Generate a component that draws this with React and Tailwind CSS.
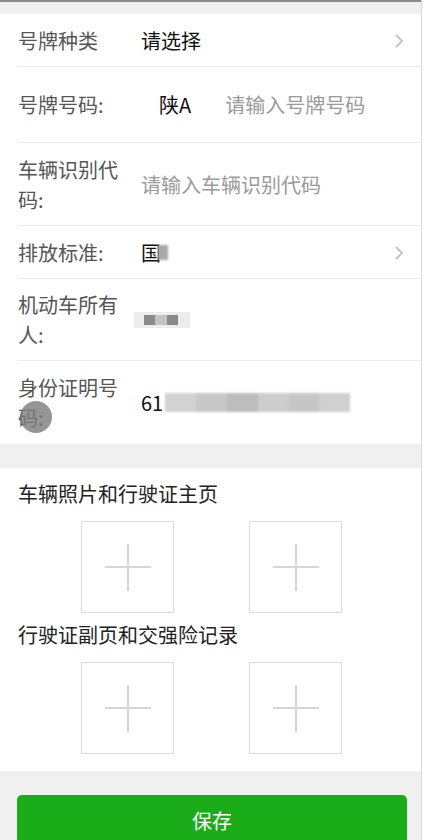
import React from "react";

const font = { fontFamily: '"Noto Sans CJK SC", "Noto Sans", sans-serif' };

function Chevron() {
  return (
    <svg width="12" height="16" viewBox="0 0 12 16" className="shrink-0">
      <path d="M3 2 L9 8 L3 14" fill="none" stroke="#c4c4c4" strokeWidth="2" />
    </svg>
  );
}

function Row({ h, label, children, chevron, divider = true }) {
  return (
    <div className={`relative flex items-center pl-[18px] pr-[16px] ${h}`}>
      <div className="w-[112px] shrink-0 text-[20px] leading-[30px] text-[#555]">{label}</div>
      <div className="flex-1 flex items-center pl-[11px]">{children}</div>
      {chevron && <Chevron />}
      {divider && <div className="absolute left-[18px] right-0 bottom-0 h-px bg-[#ebebeb]" />}
    </div>
  );
}

function UploadBox() {
  return (
    <div className="relative w-[93px] h-[92px] border border-[#dcdcdc] flex items-center justify-center bg-white">
      <div className="absolute w-[46px] h-[2px] bg-[#d6d6d6]" />
      <div className="absolute w-[2px] h-[47px] bg-[#d6d6d6]" />
    </div>
  );
}

export default function App() {
  return (
    <div style={font} className="w-[425px] h-[840px] overflow-hidden bg-white relative">
      <div className="w-[422px] h-full border-r border-[#d8d8d8] bg-[#f0f0f0] flex flex-col">
        <div className="h-[2px] shrink-0 bg-[#8a8a8a]" />
        <div className="h-[12px] shrink-0 bg-[#f0f0f0]" />
        <div className="bg-white shrink-0">
          <Row h="h-[53px]" label="号牌种类" chevron>
            <span className="text-[20px] text-[#111]">请选择</span>
          </Row>
          <Row h="h-[76px]" label="号牌号码:">
            <span className="text-[20px] text-[#111] ml-[18px]">陕A</span>
            <span className="text-[20px] text-[#9a9a9a] ml-[34px]">请输入号牌号码</span>
          </Row>
          <Row h="h-[83px]" label="车辆识别代码:">
            <span className="text-[20px] text-[#9a9a9a]">请输入车辆识别代码</span>
          </Row>
          <Row h="h-[53px]" label="排放标准:" chevron>
            <span className="text-[20px] text-[#111]">国</span>
            <span className="ml-[-3px] w-[10px] h-[15px] bg-[#a9a9a9] blur-[1px]" />
          </Row>
          <Row h="h-[82px]" label="机动车所有人:">
            <div className="relative w-[56px] h-[16px] ml-[-7px] bg-[#ececec] blur-[0.5px]">
              <div className="absolute left-[10px] top-[3px] w-[11px] h-[10px] bg-[#8a8a8a]" />
              <div className="absolute left-[21px] top-[3px] w-[12px] h-[10px] bg-[#c4c4c4]" />
              <div className="absolute left-[33px] top-[3px] w-[11px] h-[10px] bg-[#8a8a8a]" />
            </div>
          </Row>
          <Row h="h-[83px]" label="身份证明号码:" divider={false}>
            <span className="text-[20px] text-[#111]">61</span>
            <div className="ml-[2px] w-[185px] h-[19px] flex blur-[1px]">
              <div className="flex-1 bg-[#d2d2d2]" />
              <div className="flex-1 bg-[#c8c8c8]" />
              <div className="flex-1 bg-[#bdbdbd]" />
              <div className="flex-1 bg-[#cdcdcd]" />
              <div className="flex-1 bg-[#c6c6c6]" />
              <div className="flex-1 bg-[#d0d0d0]" />
            </div>
          </Row>
        </div>

        <div className="h-[24px] shrink-0" />

        <div className="bg-white pt-[14px] pb-[17px] shrink-0">
          <div className="pl-[18px] text-[20px] leading-[24px] text-[#222]">车辆照片和行驶证主页</div>
          <div className="flex gap-[75px] pl-[81px] mt-[15px]">
            <UploadBox />
            <UploadBox />
          </div>
          <div className="pl-[18px] mt-[10px] text-[20px] leading-[24px] text-[#222]">行驶证副页和交强险记录</div>
          <div className="flex gap-[75px] pl-[81px] mt-[15px]">
            <UploadBox />
            <UploadBox />
          </div>
        </div>

        <div className="pt-[24px] px-[17px] shrink-0">
          <button className="w-[390px] h-[52px] rounded-[5px] bg-[#1aad19] text-white text-[20px] flex items-center justify-center">
            保存
          </button>
        </div>
      </div>

      <div className="absolute left-[20px] top-[401px] w-[32px] h-[32px] rounded-full bg-[#7a7a7a]/80" />
    </div>
  );
}
